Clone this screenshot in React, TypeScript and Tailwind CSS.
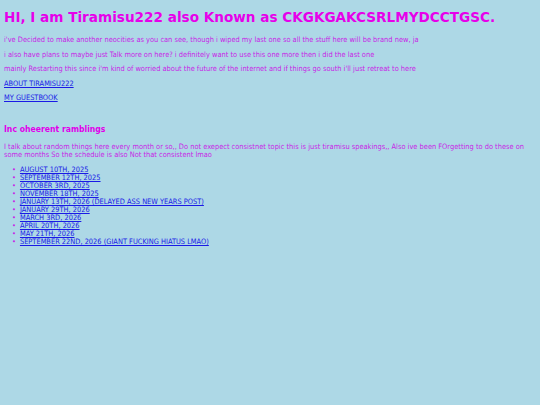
export default function App() {
  const posts = [
    "AUGUST 10TH, 2025",
    "SEPTEMBER 12TH, 2025",
    "OCTOBER 3RD, 2025",
    "NOVEMBER 18TH, 2025",
    "JANUARY 13TH, 2026 (DELAYED ASS NEW YEARS POST)",
    "JANUARY 29TH, 2026",
    "MARCH 3RD, 2026",
    "APRIL 20TH, 2026",
    "MAY 21TH, 2026",
    "SEPTEMBER 22ND, 2026 (GIANT FUCKING HIATUS LMAO)",
  ];

  return (
    <div className="min-h-screen bg-[#add8e6] px-1 pt-[9px] text-[#c81ee6] font-['DejaVu_Sans_Condensed','DejaVu_Sans',sans-serif]">
      <h1 className="text-[13.6px] font-bold leading-[16px] text-[#e600ea] font-['DejaVu_Sans',sans-serif]">
        HI, I am Tiramisu222 also Known as CKGKGAKCSRLMYDCCTGSC.
      </h1>

      <div className="mt-[10px] flex flex-col gap-[5.6px] text-[7.4px] leading-[9px]">
        <p>i've Decided to make another neocities as you can see, though i wiped my last one so all the stuff here will be brand new, ja</p>
        <p>i also have plans to maybe just Talk more on here? i definitely want to use this one more then i did the last one</p>
        <p>mainly Restarting this since i'm kind of worried about the future of the internet and if things go south i'll just retreat to here</p>
        <p>
          <a href="#" className="text-[#1a1ae6] underline">ABOUT TIRAMISU222</a>
        </p>
        <p>
          <a href="#" className="text-[#1a1ae6] underline">MY GUESTBOOK</a>
        </p>
      </div>

      <h2 className="mt-[22px] text-[8.6px] font-bold leading-[11px] text-[#e000ea]">Inc oheerent ramblings</h2>

      <p className="mt-[8px] text-[7.4px] leading-[8px]">
        I talk about random things here every month or so,, Do not exepect consistnet topic this is just tiramisu speakings,, Also ive been FOrgetting to do these on some months So the schedule is also Not that consistent lmao
      </p>

      <ul className="mt-[7px] pl-[8px] text-[7.4px] leading-[8px]">
        {posts.map((p) => (
          <li key={p} className="flex items-center gap-[4px]">
            <span className="text-[#c81ee6]">•</span>
            <a href="#" className="text-[#1a1ae6] underline">{p}</a>
          </li>
        ))}
      </ul>
    </div>
  );
}
